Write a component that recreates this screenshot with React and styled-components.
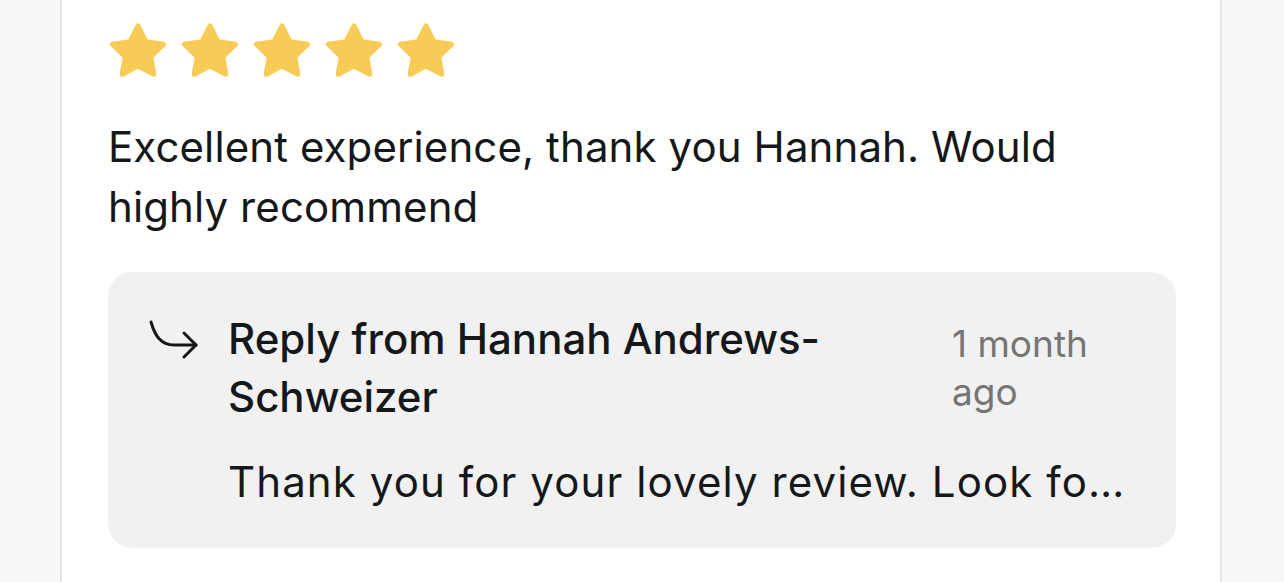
import React from 'react';
import styled, { createGlobalStyle } from 'styled-components';

const GlobalStyle = createGlobalStyle`
  html, body {
    margin: 0;
    padding: 0;
    background: #f7f8fa;
    font-family: Inter, "Noto Sans", sans-serif;
    color: #15181b;
  }
`;

const Page = styled.div`
  padding-left: 60px;
  width: 1162px;
  height: 582px;
  overflow: hidden;
`;

const Card = styled.div`
  background: #fff;
  border-left: 2px solid #e3e4e6;
  border-right: 2px solid #e3e4e6;
  padding: 23px 44px 40px 46px;
  min-height: 582px;
  box-sizing: border-box;
`;

const Stars = styled.div`
  display: flex;
  gap: 16px;
  margin-left: 2px;
`;

const Comment = styled.p`
  margin: 40px 0 0;
  font-size: 42px;
  line-height: 60px;
  letter-spacing: 0.1px;
`;

const ReplyBox = styled.div`
  margin-top: 35px;
  background: #f1f1f1;
  border-radius: 24px;
  padding: 38px 40px 37px 40px;
  display: grid;
  grid-template-columns: 80px 1fr;
`;

const ReplyIcon = styled.div`
  padding-top: 8px;
`;

const ReplyMain = styled.div`
  min-width: 0;
`;

const ReplyHeader = styled.div`
  display: flex;
  gap: 24px;
  justify-content: space-between;
`;

const ReplyTitle = styled.div`
  flex: 1;
  font-size: 42px;
  line-height: 58px;
  font-weight: 500;
  max-width: 700px;
`;

const ReplyTime = styled.div`
  width: 184px;
  flex-shrink: 0;
  font-size: 37px;
  line-height: 48px;
  color: #757575;
  padding-top: 10px;
`;

const ReplyText = styled.div`
  margin-top: 27px;
  font-size: 42px;
  line-height: 58px;
  letter-spacing: 1.1px;
  white-space: nowrap;
  overflow: hidden;
  text-overflow: ellipsis;
`;

const Star = () => (
  <svg width="56" height="54" viewBox="1 1 22 21">
    <polygon
      points="12,2 15.09,8.26 22,9.27 17,14.14 18.18,21.02 12,17.77 5.82,21.02 7,14.14 2,9.27 8.91,8.26"
      fill="#f7cb55"
      stroke="#f7cb55"
      strokeWidth="2"
      strokeLinejoin="round"
    />
  </svg>
);

const ReplyArrow = () => (
  <svg width="52" height="44" viewBox="0 0 52 44" fill="none" stroke="#15181b" strokeWidth="3" strokeLinecap="round" strokeLinejoin="round">
    <path d="M3 4 C7 18 13 27 26 27 L48 27" />
    <path d="M36 15 L48 27 L36 39" />
  </svg>
);

export default function App() {
  return (
    <>
      <GlobalStyle />
      <Page>
        <Card>
          <Stars>
            {[0, 1, 2, 3, 4].map((i) => (
              <Star key={i} />
            ))}
          </Stars>
          <Comment>Excellent experience, thank you Hannah. Would highly recommend</Comment>
          <ReplyBox>
            <ReplyIcon>
              <ReplyArrow />
            </ReplyIcon>
            <ReplyMain>
              <ReplyHeader>
                <ReplyTitle>Reply from Hannah Andrews-Schweizer</ReplyTitle>
                <ReplyTime>1 month ago</ReplyTime>
              </ReplyHeader>
              <ReplyText>Thank you for your lovely review. Look forward to seeing you again soon!</ReplyText>
            </ReplyMain>
          </ReplyBox>
        </Card>
      </Page>
    </>
  );
}
